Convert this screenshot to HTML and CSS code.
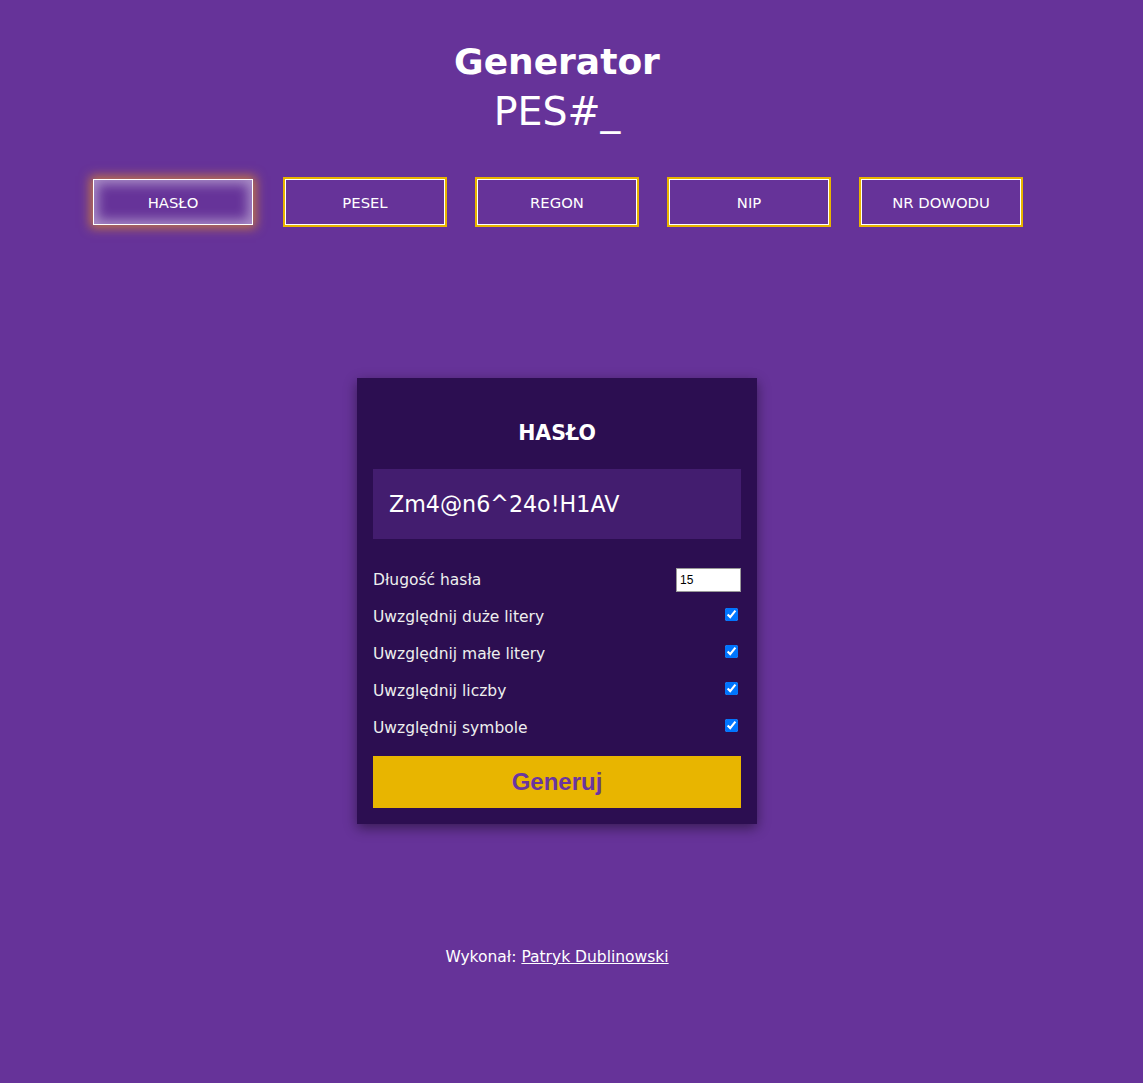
FILE: index.html
```html
<!DOCTYPE html>
<html lang="pl">
<head>
<meta charset="utf-8">
<title>Generator PES#_</title>
<link rel="stylesheet" href="styles.css">
</head>
<body>
<div class="page">
  <header class="header">
    <h1 class="title">Generator</h1>
    <div class="subtitle">PES#_</div>
  </header>

  <nav class="nav">
    <button class="nav-btn active">HASŁO</button>
    <button class="nav-btn">PESEL</button>
    <button class="nav-btn">REGON</button>
    <button class="nav-btn">NIP</button>
    <button class="nav-btn">NR DOWODU</button>
  </nav>

  <main class="card">
    <h2 class="card-title">HASŁO</h2>
    <div class="result">Zm4@n6^24o!H1AV</div>
    <div class="options">
      <div class="row">
        <label for="len">Długość hasła</label>
        <input id="len" class="num" type="number" value="15">
      </div>
      <div class="row">
        <label for="up">Uwzględnij duże litery</label>
        <input id="up" class="check" type="checkbox" checked>
      </div>
      <div class="row">
        <label for="low">Uwzględnij małe litery</label>
        <input id="low" class="check" type="checkbox" checked>
      </div>
      <div class="row">
        <label for="dig">Uwzględnij liczby</label>
        <input id="dig" class="check" type="checkbox" checked>
      </div>
      <div class="row">
        <label for="sym">Uwzględnij symbole</label>
        <input id="sym" class="check" type="checkbox" checked>
      </div>
    </div>
    <button class="generate">Generuj</button>
  </main>

  <footer class="footer">Wykonał: <a href="#" class="author">Patryk Dublinowski</a></footer>
</div>
</body>
</html>
```

FILE: styles.css
```css
html, body {
  margin: 0;
  padding: 0;
  background: #663399;
}
body {
  font-family: "DejaVu Sans", "Noto Sans", sans-serif;
  color: #fff;
  min-height: 1083px;
}
.page {
  width: 1114px;
  display: flex;
  flex-direction: column;
  align-items: center;
}
.header {
  padding-top: 38px;
  text-align: center;
}
.title {
  margin: 0;
  font-size: 36px;
  font-weight: bold;
  line-height: 47px;
}
.subtitle {
  font-size: 39.5px;
  line-height: 52px;
  font-weight: normal;
}
.nav {
  margin-top: 42px;
  display: flex;
  gap: 32px;
}
.nav-btn {
  width: 160px;
  height: 46px;
  background: transparent;
  border: 1px solid #fff;
  outline: 2px solid #e8b500;
  color: #fff;
  font-family: "DejaVu Sans", sans-serif;
  font-size: 14.8px;
  padding: 0;
  cursor: pointer;
}
.nav-btn.active {
  outline: none;
  box-shadow: 0 0 10px 3px rgba(226, 140, 40, 0.75), inset 0 0 12px 4px rgba(255, 255, 255, 0.45);
}
.card {
  margin-top: 153px;
  width: 400px;
  box-sizing: border-box;
  padding: 43px 16px 16px;
  background: #2c0e51;
  box-shadow: 0 4px 12px rgba(0, 0, 0, 0.45);
}
.card-title {
  margin: 0 0 24px;
  text-align: center;
  font-size: 20.5px;
  line-height: 24px;
  font-weight: bold;
}
.result {
  height: 70px;
  padding: 0 16px;
  display: flex;
  align-items: center;
  background: #431d6f;
  font-size: 22.2px;
}
.options {
  margin-top: 22px;
}
.row {
  height: 37px;
  display: flex;
  align-items: center;
  justify-content: space-between;
  font-size: 15.5px;
  color: #eee;
}
.num {
  width: 65px;
  height: 24px;
  box-sizing: border-box;
  border: 1px solid #999;
  padding: 0 3px;
  font-family: "Liberation Sans", Arial, sans-serif;
  font-size: 12px;
  background: #fff;
  color: #000;
}
.check {
  width: 13px;
  height: 13px;
  margin: 0 3px 5px 0;
}
.generate {
  margin-top: 10px;
  width: 100%;
  height: 52px;
  border: none;
  background: #e8b500;
  color: #6a35a0;
  font-family: "Liberation Sans", Arial, sans-serif;
  font-weight: bold;
  font-size: 24px;
  cursor: pointer;
}
.footer {
  margin-top: 124px;
  font-size: 15.5px;
  line-height: 18px;
  color: #fff;
}
.author {
  color: #fff;
  text-decoration: underline;
}
```
